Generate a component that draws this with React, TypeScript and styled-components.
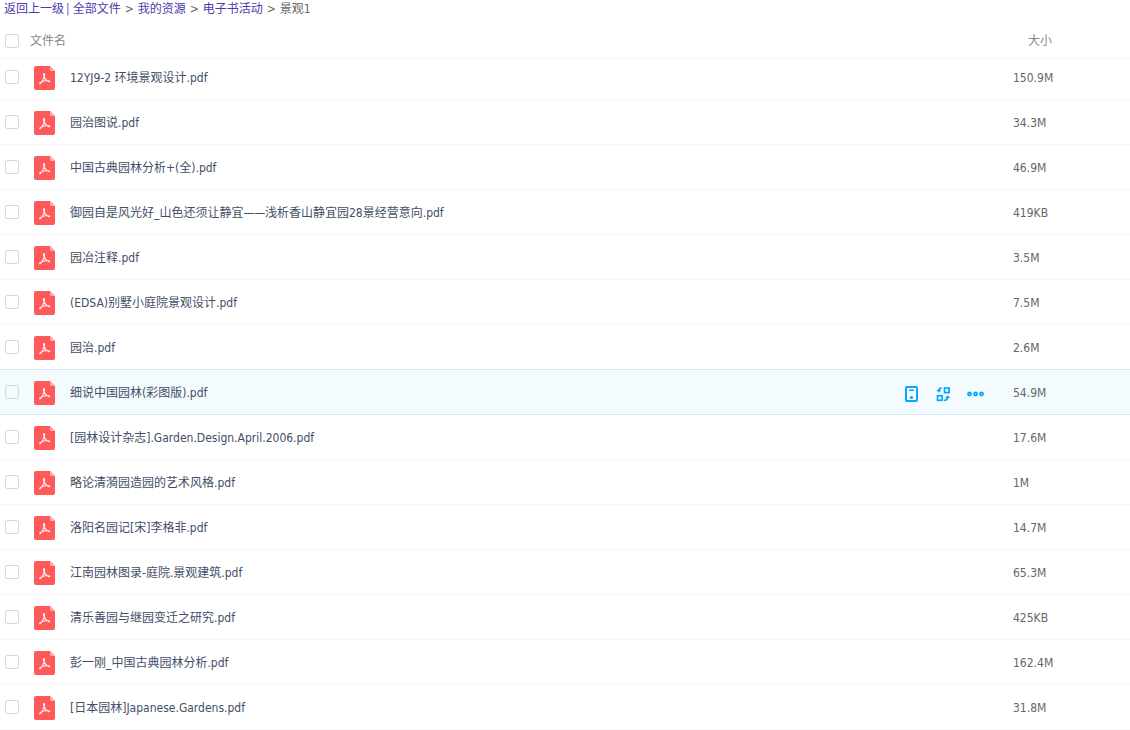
import React from 'react';
import styled, { createGlobalStyle } from 'styled-components';

const GlobalStyle = createGlobalStyle`
  * { box-sizing: border-box; }
  body {
    margin: 0;
    background: #fff;
    color: #424e67;
    font: 12px/18px "DejaVu Sans Condensed", "Noto Sans CJK SC", sans-serif;
  }
`;

const Breadcrumb = styled.nav`
  display: flex;
  height: 23px;
  padding-left: 4px;
  color: #666;
  white-space: pre;
`;

const CrumbLink = styled.a`
  color: #4f39ad;
  text-decoration: none;
`;

const Arrow = styled.span`
  padding: 0 4px;
`;

const Bar = styled.span`
  padding: 0 3px 0 2px;
  color: #7a3fc0;
`;

const FileTable = styled.table`
  width: 100%;
  table-layout: fixed;
  border-spacing: 0;
`;

const HeadCell = styled.th<{ $width?: number; $indent?: number }>`
  width: ${p => (p.$width ? `${p.$width}px` : 'auto')};
  height: 36px;
  padding: 0 0 0 ${p => p.$indent ?? 0}px;
  border-bottom: 1px solid #f2f6fd;
  color: #888;
  font-weight: 400;
  text-align: left;
`;

const Cell = styled.td`
  height: 45px;
  padding: 0;
  border-bottom: 1px solid #f2f6fd;
`;

const SizeCell = styled(Cell)`
  padding-top: 2px;
  color: #666;
`;

const Row = styled.tr<{ $active: boolean }>`
  &:first-child > td {
    height: 41px;
    padding-bottom: 4px;
  }
  > td {
    ${p => p.$active && `
      background: #f4fbff;
      border-color: #d5e8f8;
      box-shadow: 0 -1px 0 #d5e8f8;
    `}
  }
`;

const Tick = styled.input`
  appearance: none;
  display: block;
  width: 14px;
  height: 14px;
  margin: 0 0 0 5px;
  border: 1px solid #d3dae4;
  border-radius: 2px;
  background: transparent;
  &:checked { background: #06a7ff; border-color: #06a7ff; }
`;

const FileLabel = styled.label`
  display: flex;
  align-items: center;
  gap: 15px;
  padding: 2px 0 0 4px;
  white-space: nowrap;
`;

const Actions = styled.div`
  display: flex;
  gap: 16px;
  padding-top: 3px;
`;

const ActionButton = styled.button`
  display: block;
  width: 16px;
  height: 16px;
  padding: 0;
  border: 0;
  background: none;
  color: #06a7ff;
  cursor: pointer;
  svg { display: block; overflow: visible; }
`;

const PdfIcon = () => (
  <svg width="21" height="24" viewBox="0 0 21 24" aria-hidden="true">
    <path d="M2 0H16L21 5V22a2 2 0 0 1-2 2H2a2 2 0 0 1-2-2V2a2 2 0 0 1 2-2Z" fill="#ff5959" />
    <path d="M16 0L21 5H17.500a1.500 1.500 0 0 1-1.500-1.500Z" fill="#ffacac" />
    <path
      d="M10 7.500C9.200 7.500 9.400 9 9.900 10.300C10.700 12.500 12.200 14.500 14.500 15.600C15.600 16.100 16.200 15.100 15 14.700C12.500 14.200 9 15 6.500 16.400C5 17.300 5.600 18.400 6.700 17.300C8.400 15.500 9.900 12.500 10.500 9.700C10.700 8.500 10.600 7.500 10 7.500Z"
      fill="none"
      stroke="#ffeded"
      strokeWidth="1.100"
      strokeLinejoin="round"
    />
  </svg>
);

const DeviceIcon = () => (
  <svg width="16" height="16" viewBox="0 0 16 16" fill="none" stroke="currentColor" strokeWidth="2" aria-hidden="true">
    <rect x="3" y="1" width="11" height="14" rx="1" />
    <path d="M6 4.250H11" strokeWidth="1.500" />
    <circle cx="8.500" cy="11.500" r="1.600" fill="currentColor" stroke="none" />
  </svg>
);

const TransferIcon = () => (
  <svg width="16" height="16" viewBox="0 0 16 16" fill="none" stroke="currentColor" strokeWidth="1.700" aria-hidden="true">
    <rect x="9.500" y="2" width="4.600" height="4.600" />
    <rect x="2.500" y="9.700" width="4.600" height="4.600" />
    <path d="M6.800 2C4.800 2 3.900 2.800 3.800 4.500" />
    <path d="M1.200 4L6.400 4L3.800 6.800Z" fill="currentColor" stroke="none" />
    <path d="M9.200 14.300C11.500 14.300 12.500 13.500 12.600 11.500" />
    <path d="M10 12L15.200 12L12.600 9.200Z" fill="currentColor" stroke="none" />
  </svg>
);

const MoreIcon = () => (
  <svg width="17" height="16" viewBox="0 0 17 16" fill="none" stroke="currentColor" strokeWidth="1.800" aria-hidden="true">
    <circle cx="2.500" cy="8" r="1.500" />
    <circle cx="8.500" cy="8" r="1.500" />
    <circle cx="14.500" cy="8" r="1.500" />
  </svg>
);

const files = [
  { name: '12YJ9-2 环境景观设计.pdf', size: '150.9M' },
  { name: '园治图说.pdf', size: '34.3M' },
  { name: '中国古典园林分析+(全).pdf', size: '46.9M' },
  { name: '御园自是风光好_山色还须让静宜——浅析香山静宜园28景经营意向.pdf', size: '419KB' },
  { name: '园冶注释.pdf', size: '3.5M' },
  { name: '(EDSA)别墅小庭院景观设计.pdf', size: '7.5M' },
  { name: '园治.pdf', size: '2.6M' },
  { name: '细说中国园林(彩图版).pdf', size: '54.9M', active: true },
  { name: '[园林设计杂志].Garden.Design.April.2006.pdf', size: '17.6M' },
  { name: '略论清漪园造园的艺术风格.pdf', size: '1M' },
  { name: '洛阳名园记[宋]李格非.pdf', size: '14.7M' },
  { name: '江南园林图录-庭院.景观建筑.pdf', size: '65.3M' },
  { name: '清乐善园与继园变迁之研究.pdf', size: '425KB' },
  { name: '彭一刚_中国古典园林分析.pdf', size: '162.4M' },
  { name: '[日本园林]Japanese.Gardens.pdf', size: '31.8M' },
];

const parents = ['全部文件', '我的资源', '电子书活动'];

export default function App() {
  return (
    <>
      <GlobalStyle />
      <Breadcrumb>
        <CrumbLink href="#up">返回上一级</CrumbLink>
        <Bar>|</Bar>
        {parents.map(name => (
          <React.Fragment key={name}>
            <CrumbLink href={`#${name}`}>{name}</CrumbLink>
            <Arrow>&gt;</Arrow>
          </React.Fragment>
        ))}
        <span>景观1</span>
      </Breadcrumb>
      <FileTable>
        <thead>
          <tr>
            <HeadCell $width={30}><Tick type="checkbox" id="all" /></HeadCell>
            <HeadCell><label htmlFor="all">文件名</label></HeadCell>
            <HeadCell $width={110} />
            <HeadCell $width={117} $indent={15}>大小</HeadCell>
          </tr>
        </thead>
        <tbody>
          {files.map((file, i) => (
            <Row key={file.name} $active={!!file.active}>
              <Cell><Tick type="checkbox" id={`file-${i}`} /></Cell>
              <Cell>
                <FileLabel htmlFor={`file-${i}`}>
                  <PdfIcon />
                  {file.name}
                </FileLabel>
              </Cell>
              <Cell>
                {file.active && (
                  <Actions>
                    <ActionButton aria-label="发送到设备"><DeviceIcon /></ActionButton>
                    <ActionButton aria-label="转存"><TransferIcon /></ActionButton>
                    <ActionButton aria-label="更多"><MoreIcon /></ActionButton>
                  </Actions>
                )}
              </Cell>
              <SizeCell>{file.size}</SizeCell>
            </Row>
          ))}
        </tbody>
      </FileTable>
    </>
  );
}
